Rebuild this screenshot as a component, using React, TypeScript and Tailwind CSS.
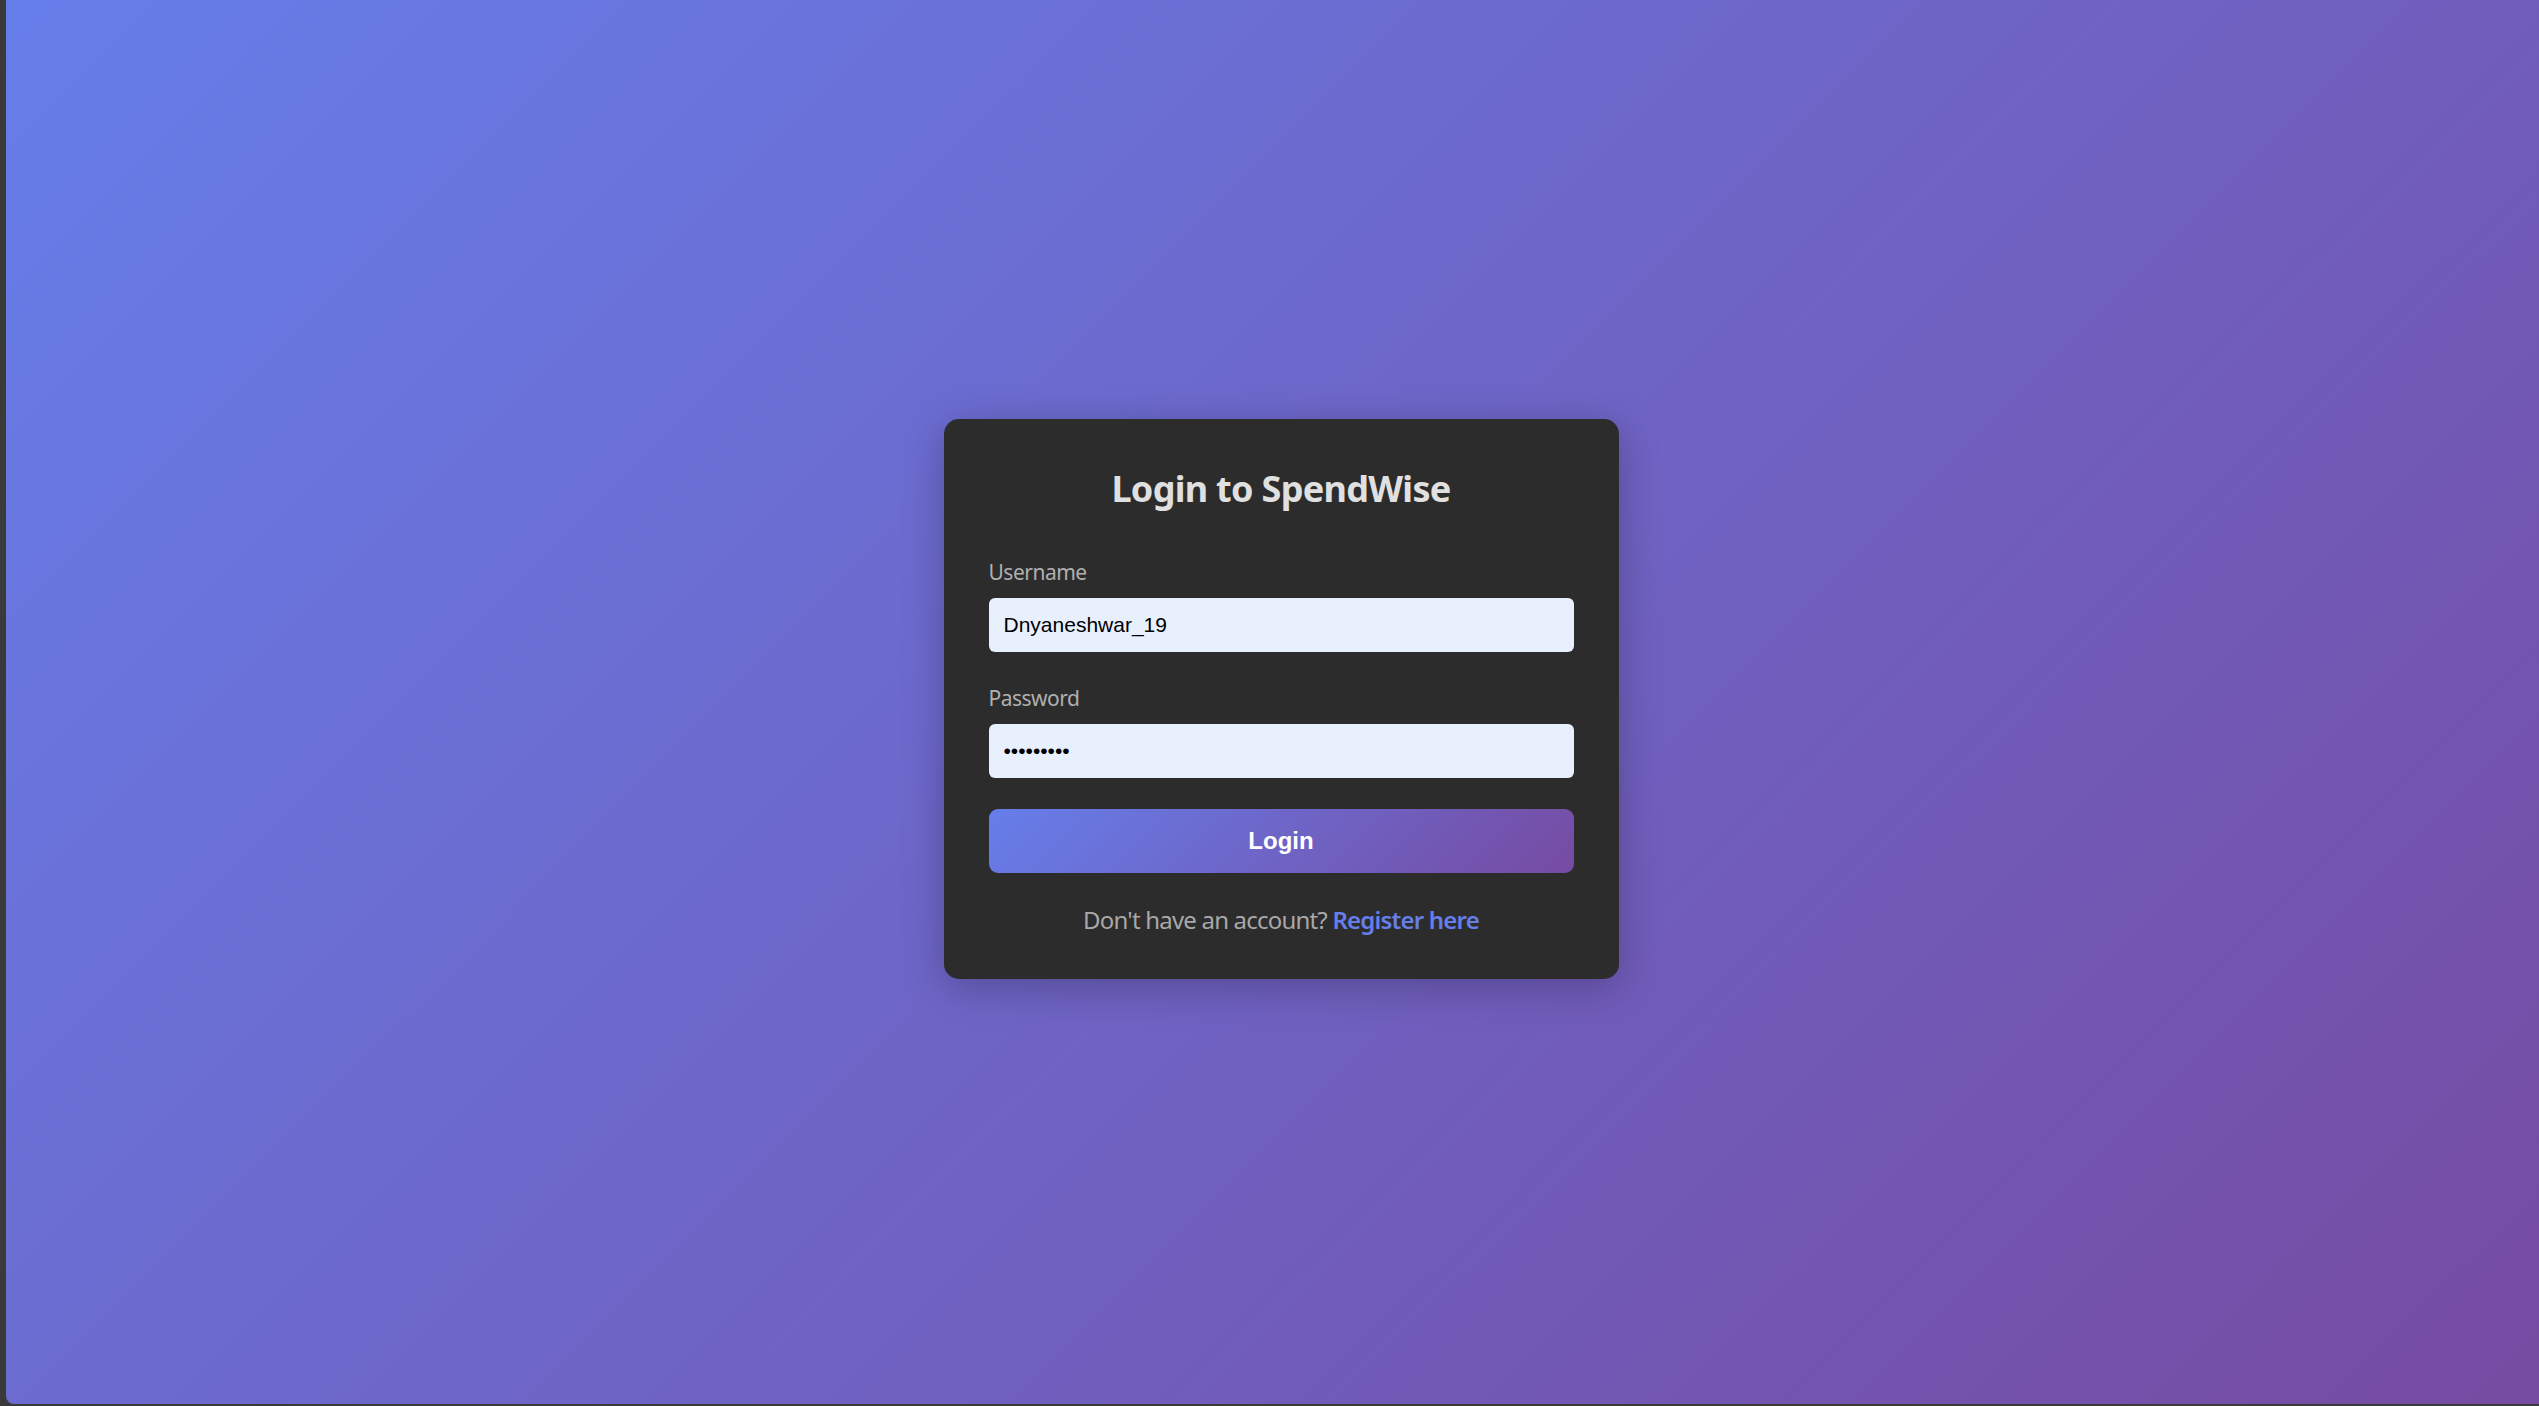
export default function App() {
  return (
    <div className="flex h-screen w-full bg-[#3a3a3a] pl-[6px] pb-[2px]">
      {/* Gradient page */}
      <div className="flex flex-1 items-center justify-center rounded-bl-[8px] bg-[linear-gradient(135deg,#667eea_0%,#764ba2_100%)] pl-[17px] pb-[7px]">
        <div className="w-[675px] rounded-[15px] bg-[#2c2c2c] px-[45px] pt-[48px] pb-[43px] shadow-[0_8px_40px_rgba(0,0,0,0.25)] [font-family:'Segoe_UI','Noto_Sans',sans-serif]">
          <h2 className="text-center text-[36px] font-bold leading-[44px] tracking-[-0.7px] text-[#e0e0e0]">
            Login to SpendWise
          </h2>

          <form className="mt-[47px] flex flex-col">
            <label className="text-[21px] leading-[28px] tracking-[-0.5px] text-[#b0b0b0]">Username</label>
            <input
              type="text"
              defaultValue="Dnyaneshwar_19"
              className="mt-[12px] h-[54px] w-full rounded-[6px] bg-[#e8f0fe] px-[15px] text-[21px] text-black outline-none [font-family:'Liberation_Sans',Arial,sans-serif]"
            />

            <label className="mt-[32px] text-[21px] leading-[28px] tracking-[-0.5px] text-[#b0b0b0]">Password</label>
            <input
              type="password"
              defaultValue="123456789"
              className="mt-[12px] h-[54px] w-full rounded-[6px] bg-[#e8f0fe] px-[15px] text-[21px] text-black outline-none [font-family:'Liberation_Sans',Arial,sans-serif]"
            />

            <button
              type="button"
              className="mt-[31px] h-[64px] w-full rounded-[9px] bg-[linear-gradient(135deg,#667eea_0%,#764ba2_100%)] text-[24px] font-bold text-white [font-family:'Liberation_Sans',Arial,sans-serif]"
            >
              Login
            </button>
          </form>

          <p className="mt-[31px] text-center text-[24px] leading-[32px] tracking-[-0.8px] text-[#a8a8a8]">
            Don't have an account?{" "}
            <a href="#" className="font-semibold text-[#667eea]">
              Register here
            </a>
          </p>
        </div>
      </div>
    </div>
  );
}
